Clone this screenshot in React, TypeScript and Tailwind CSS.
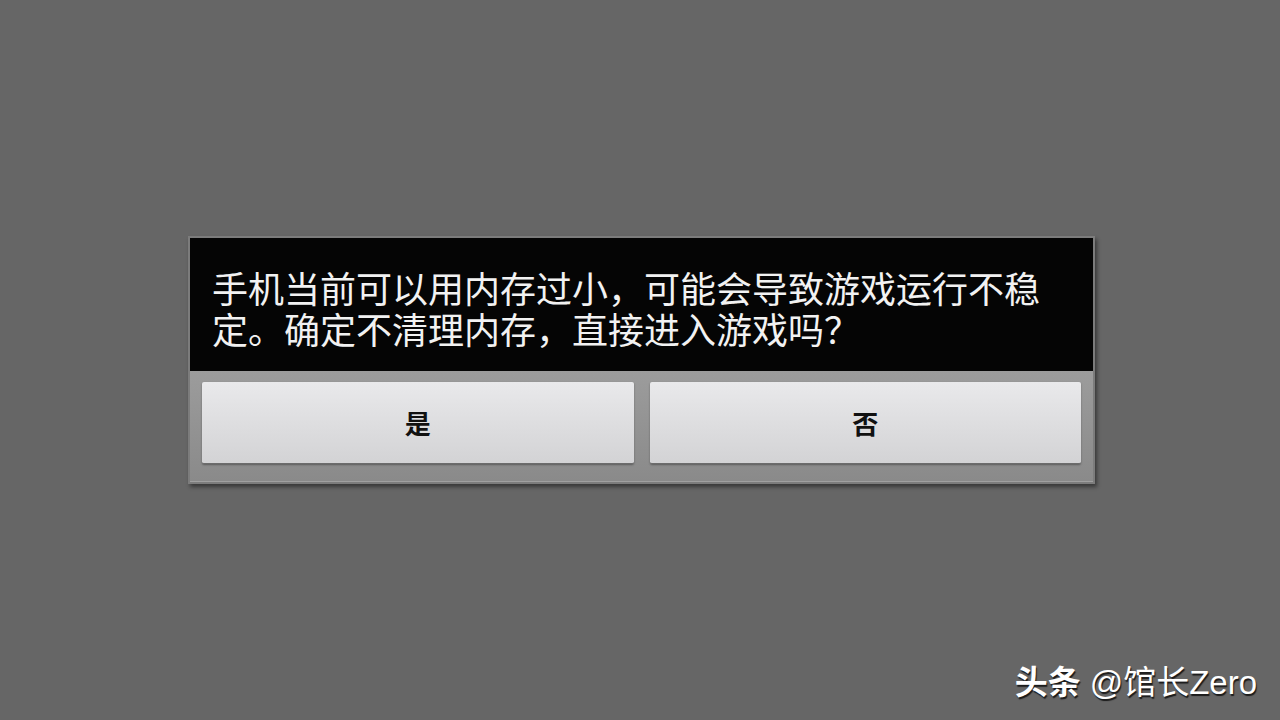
export default function App() {
  const cjk = { fontFamily: '"Noto Sans CJK SC", "Noto Sans", sans-serif' };
  const mark = { fontFamily: '"Liberation Sans", "Noto Sans CJK SC", sans-serif' };
  return (
    <div className="relative w-[1280px] h-[720px] bg-[#666666] overflow-hidden" style={cjk}>
      <div className="flex justify-center pt-[236px] pl-[3px]">
        {/* dialog frame */}
        <div className="w-[907px] border-2 border-[#7c7c7c] bg-[#8f8f8f] shadow-[2px_3px_4px_rgba(0,0,0,0.45)]">
          <div className="bg-[#050505] h-[133px] pl-[22px] pt-[29px] text-[36px] leading-[41px] text-[#f2f2f2]">
            <div>手机当前可以用内存过小，可能会导致游戏运行不稳</div>
            <div>定。确定不清理内存，直接进入游戏吗？</div>
          </div>
          <div className="flex gap-[16px] pl-[12px] pr-[12px] pt-[11px] pb-[17px] bg-gradient-to-b from-[#9c9c9c] to-[#8a8a8a] border-b border-[#a0a0a0]">
            <button className="flex-1 h-[82px] flex items-center justify-center rounded-[2px] bg-gradient-to-b from-[#e9e9eb] to-[#d3d3d5] border-b border-[#6c6c6c] shadow-[0_1px_2px_rgba(0,0,0,0.35)] text-[26px] font-bold text-[#111]">
              是
            </button>
            <button className="flex-1 h-[82px] flex items-center justify-center rounded-[2px] bg-gradient-to-b from-[#e9e9eb] to-[#d3d3d5] border-b border-[#6c6c6c] shadow-[0_1px_2px_rgba(0,0,0,0.35)] text-[26px] font-bold text-[#111]">
              否
            </button>
          </div>
        </div>
      </div>
      {/* watermark */}
      <div
        className="absolute right-[23px] bottom-[21px] flex items-baseline gap-[9px] text-white text-[33px] leading-none [text-shadow:1px_2px_1px_rgba(0,0,0,0.75)]"
        style={mark}
      >
        <span className="font-bold">头条</span>
        <span>@馆长Zero</span>
      </div>
    </div>
  );
}
